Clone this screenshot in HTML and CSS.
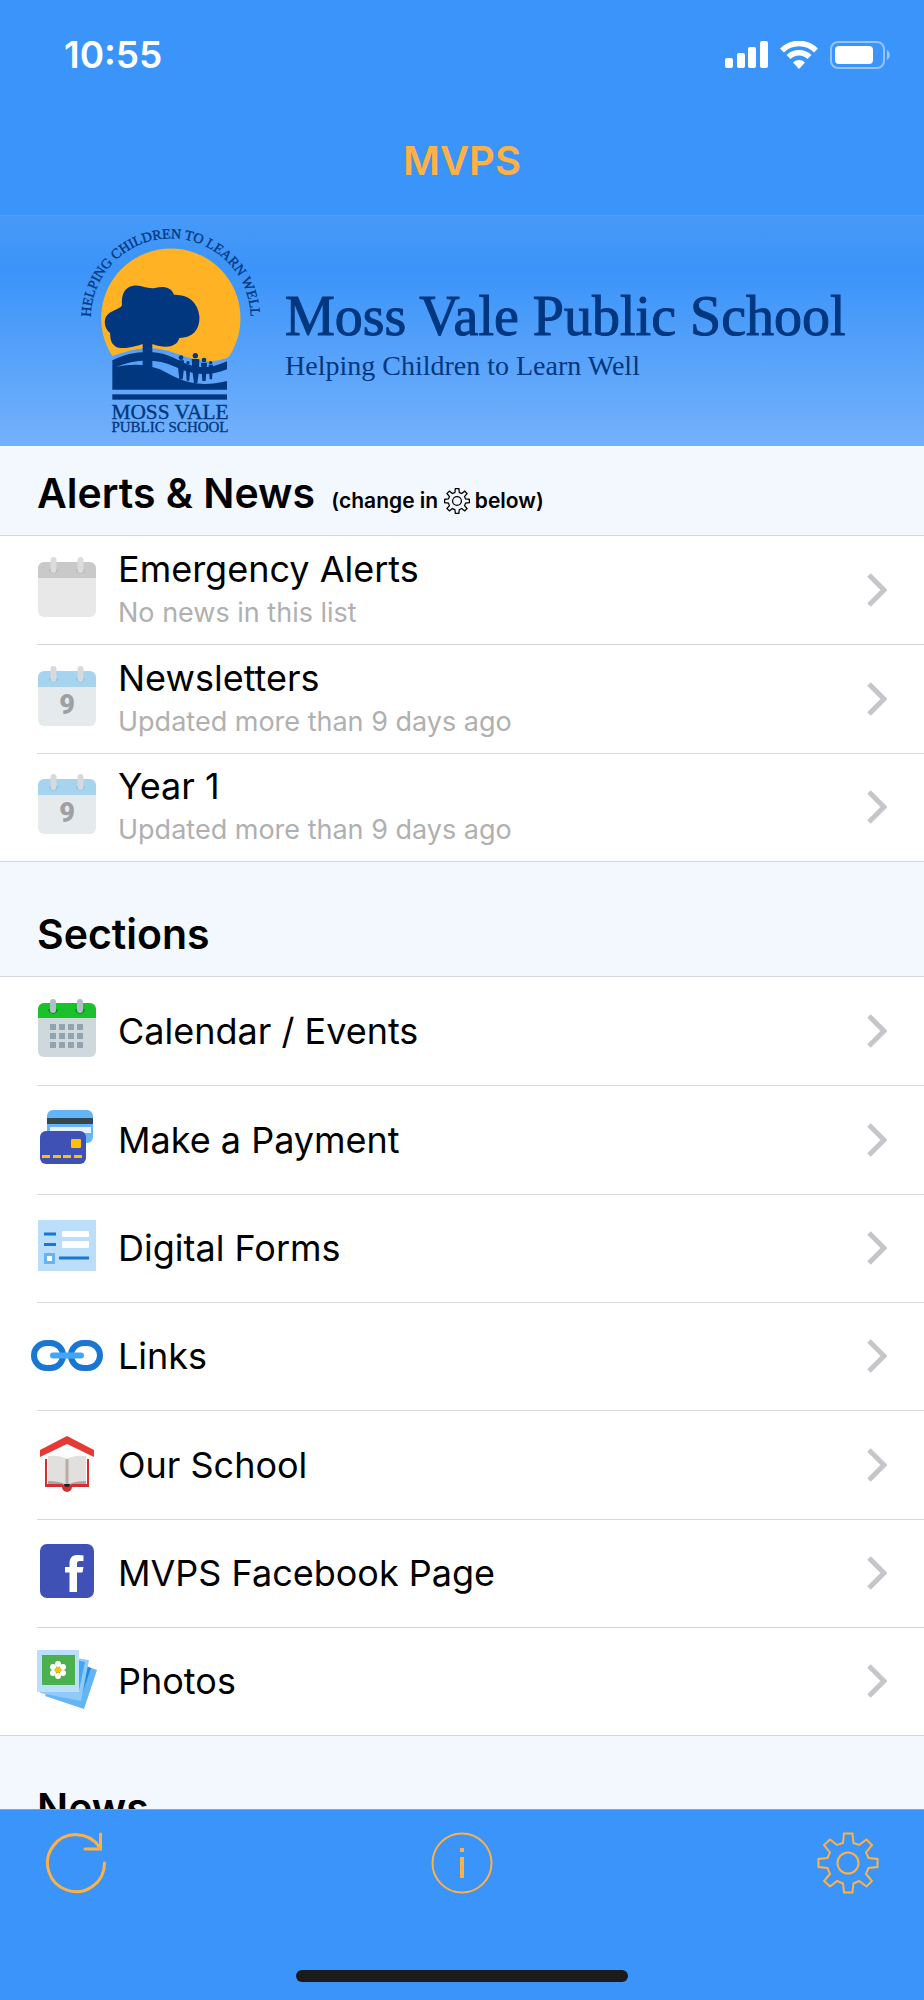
FILE: index.html
```html
<!DOCTYPE html>
<html lang="en">
<head>
    <meta charset="UTF-8">
    <meta name="viewport" content="width=device-width, initial-scale=1.0">
    <title>MVPS</title>
    <link rel="stylesheet" href="styles.css">
</head>
<body>
    <!-- Shared shapes -->
    <svg class="sprite" aria-hidden="true">
        <symbol id="chevron" viewBox="0 0 20 34">
            <path d="M2 2l15 15L2 32" fill="none" stroke="#c6c5ca" stroke-width="5"/>
        </symbol>
        <symbol id="gear" viewBox="0 0 62 62">
            <g fill="none" stroke="currentColor" stroke-linejoin="miter">
                <path d="M27 1.5H35.5L36.5 11L42 13L49.5 7.5L55 13L49 20.5L51.5 26L60.5 27V35L51.5 36L49 42L55 49L49.5 54.500L42 49L36.500 51.500L35.500 60.500H27L26 51.5L20 49L13 54.5L7 49L13 42L10.5 36L1.5 35V27L10.5 26L13 20.5L7 13L13 7.5L20 13L26 11Z"/>
                <circle cx="31" cy="31" r="10.5"/>
            </g>
        </symbol>
        <symbol id="day" viewBox="0 0 58 60">
            <path d="M0 20h58v34a6 6 0 0 1-6 6H6a6 6 0 0 1-6-6z" fill="#e5eaed"/>
            <path d="M6 5h46a6 6 0 0 1 6 6v10H0V11a6 6 0 0 1 6-6z" fill="#a6d4ee"/>
            <path d="M11 12a4.500 4.500 0 0 0 9 0zM38 12a4.500 4.500 0 0 0 9 0z" fill="#93bdd6"/>
            <path d="M15.500 3v10M42.500 3v10" stroke="#d5dade" stroke-width="6" stroke-linecap="round"/>
            <text x="29" y="48" text-anchor="middle" font-family="Roboto, sans-serif" font-weight="900" font-size="27" fill="#9da1a3">9</text>
        </symbol>
    </svg>

    <div class="app">
        <header class="top">
            <div class="status-bar">
                <span class="time">10:55</span>
                <div class="status-icons">
                    <svg width="43" height="28" viewBox="0 0 43 28" fill="#fff">
                        <rect x="0" y="17" width="8" height="10" rx="2"/>
                        <rect x="12" y="12" width="8" height="15" rx="2"/>
                        <rect x="23" y="6" width="8" height="21" rx="2"/>
                        <rect x="35" y="0" width="8" height="27" rx="2"/>
                    </svg>
                    <svg width="38" height="28" viewBox="0 0 38 28">
                        <path d="M2 9.5a24 24 0 0 1 34 0M8.5 16a15 15 0 0 1 21 0" fill="none" stroke="#fff" stroke-width="5.5"/>
                        <path d="M13 21.5a8.5 8.5 0 0 1 12 0L19 28z" fill="#fff"/>
                    </svg>
                    <svg width="61" height="28" viewBox="0 0 61 28">
                        <rect x="1" y="1" width="53" height="26" rx="7" fill="none" stroke="#fff" stroke-opacity=".45" stroke-width="2"/>
                        <rect x="5" y="5" width="38" height="18" rx="4" fill="#fff"/>
                        <path d="M57 9a6 6 0 0 1 0 10z" fill="#fff" fill-opacity=".5"/>
                    </svg>
                </div>
            </div>
            <h1>MVPS</h1>
        </header>

        <div class="banner">
            <svg class="logo" viewBox="54 50 555 630" role="img" aria-label="Moss Vale Public School logo">
                <path id="arc" d="M92 327a240 240 0 0 1 480 0" fill="none"/>
                <path d="M157 440A209 209 0 1 1 508 440L500 446C470 456 440 460 405 450C360 440 320 416 265 417C215 418 185 432 157 440Z" fill="#ffb224"/>
                <g fill="#00377f">
                    <path d="M248 404C225 412 185 422 168 412C150 402 152 385 150 371C130 355 130 325 145 314C155 304 180 300 186 288C183 255 195 232 220 229C245 225 260 240 285 236C310 230 332 232 342 256C385 254 414 280 418 320C420 350 408 385 358 386C350 415 315 418 277 404V478H248Z"/>
                    <path d="M157 453C220 420 300 420 350 450C400 478 445 482 501 456V480C450 502 400 498 345 472C290 446 225 448 169 473C215 461 262 465 300 480C350 506 400 540 501 515V541H157Z"/>
                    <rect x="157" y="555" width="344" height="16"/>
                    <circle cx="363" cy="445" r="7"/>
                    <circle cx="384" cy="460" r="5"/>
                    <circle cx="406" cy="439" r="8"/>
                    <circle cx="432" cy="452" r="7"/>
                    <circle cx="452" cy="460" r="5"/>
                    <path d="M354 453h18l-1 32-3 25h-10l-3-25zM377 466h14l-3 48h-8zM395 449h23l-1 36-5 36h-10l-5-36zM423 460h18l-4 55h-10zM446 466h13l-3 44h-7z"/>
                </g>
                <g class="logo-text">
                    <text font-size="42" text-anchor="middle"><textPath href="#arc" startOffset="50%">HELPING CHILDREN TO LEARN WELL</textPath></text>
                    <text x="330" y="630" font-size="64" text-anchor="middle">MOSS VALE</text>
                    <text x="330" y="668" font-size="45" text-anchor="middle">PUBLIC SCHOOL</text>
                </g>
            </svg>
            <div class="banner-text">
                <p class="school">Moss Vale Public School</p>
                <p class="motto">Helping Children to Learn Well</p>
            </div>
        </div>

        <main>
            <h2 class="section-title first">Alerts &amp; News
                <small>(change in <svg class="mini-gear"><use href="#gear"/></svg> below)</small>
            </h2>
            <ul class="list">
                <li><a href="#">
                    <svg class="icon" viewBox="0 0 72 60">
                        <path d="M7 20h58v34a6 6 0 0 1-6 6H13a6 6 0 0 1-6-6z" fill="#e8e8e8"/>
                        <path d="M13 5h46a6 6 0 0 1 6 6v10H7V11a6 6 0 0 1 6-6z" fill="#c9c9c9"/>
                        <path d="M18 12a4.5 4.5 0 0 0 9 0zM45 12a4.5 4.5 0 0 0 9 0z" fill="#b5b5b5"/>
                        <path d="M22.5 3v10M49.5 3v10" stroke="#dcdcdc" stroke-width="6" stroke-linecap="round"/>
                    </svg>
                    <span class="label">Emergency Alerts<small>No news in this list</small></span>
                    <svg class="chevron"><use href="#chevron"/></svg>
                </a></li>
                <li><a href="#">
                    <svg class="icon" viewBox="0 0 72 60"><use href="#day" x="7" width="58" height="60"/></svg>
                    <span class="label">Newsletters<small>Updated more than 9 days ago</small></span>
                    <svg class="chevron"><use href="#chevron"/></svg>
                </a></li>
                <li><a href="#">
                    <svg class="icon" viewBox="0 0 72 60"><use href="#day" x="7" width="58" height="60"/></svg>
                    <span class="label">Year 1<small>Updated more than 9 days ago</small></span>
                    <svg class="chevron"><use href="#chevron"/></svg>
                </a></li>
            </ul>

            <h2 class="section-title">Sections</h2>
            <ul class="list">
                <li><a href="#">
                    <svg class="icon" viewBox="0 0 72 60">
                        <path d="M7 20h58v33a6 6 0 0 1-6 6H13a6 6 0 0 1-6-6z" fill="#cfd8dc"/>
                        <path d="M13 5h46a6 6 0 0 1 6 6v9H7v-9a6 6 0 0 1 6-6z" fill="#19c22a"/>
                        <path d="M17 11a5 5 0 0 0 10 0zM44 11a5 5 0 0 0 10 0z" fill="#128b1d"/>
                        <path d="M22 4v8M49 4v8" stroke="#b0bec5" stroke-width="6" stroke-linecap="round"/>
                        <path d="M19 29h34M19 38h34M19 47h34" stroke="#90a4ae" stroke-width="6" stroke-dasharray="6 3"/>
                    </svg>
                    <span class="label">Calendar / Events</span>
                    <svg class="chevron"><use href="#chevron"/></svg>
                </a></li>
                <li><a href="#">
                    <svg class="icon" viewBox="0 0 72 60">
                        <rect x="16" y="3" width="46" height="33" rx="6" fill="#64b5f6"/>
                        <path d="M16 11h46v6H16z" fill="#37474f"/>
                        <path d="M19 20h41v6H19z" fill="#e3f2fd"/>
                        <rect x="9" y="24" width="46" height="33" rx="6" fill="#3f51b5"/>
                        <rect x="40" y="32" width="10" height="9" rx="1" fill="#ffc107"/>
                        <path d="M11 49.5h8M22 49.5h8M32 49.5h8M43 49.5h8" stroke="#ffc107" stroke-width="3"/>
                    </svg>
                    <span class="label">Make a Payment</span>
                    <svg class="chevron"><use href="#chevron"/></svg>
                </a></li>
                <li><a href="#">
                    <svg class="icon" viewBox="0 0 72 60">
                        <rect x="7" y="5" width="58" height="51" rx="1" fill="#bbdefb"/>
                        <path d="M13 19h12M13 29.5h12M28 43h30" stroke="#1976d2" stroke-width="3"/>
                        <rect x="31" y="16" width="27" height="6" rx="1" fill="#fff"/>
                        <rect x="31" y="26" width="27" height="7" rx="1" fill="#fff"/>
                        <rect x="14.5" y="39.5" width="8" height="8" fill="#fff" stroke="#64b5f6" stroke-width="3"/>
                    </svg>
                    <span class="label">Digital Forms</span>
                    <svg class="chevron"><use href="#chevron"/></svg>
                </a></li>
                <li><a href="#">
                    <svg class="icon" viewBox="0 0 72 60">
                        <rect x="3" y="20" width="29" height="25" rx="12.5" fill="none" stroke="#1976d2" stroke-width="6"/>
                        <rect x="40" y="20" width="29" height="25" rx="12.5" fill="none" stroke="#1976d2" stroke-width="6"/>
                        <path d="M22 32.5h28" stroke="#42a5f5" stroke-width="6" stroke-linecap="round"/>
                    </svg>
                    <span class="label">Links</span>
                    <svg class="chevron"><use href="#chevron"/></svg>
                </a></li>
                <li><a href="#">
                    <svg class="icon" viewBox="0 0 72 60">
                        <path d="M9 18L36 4l27 14v7L36 12 9 25z" fill="#e53935"/>
                        <path d="M14 27h44v28H41a5 5 0 0 1-10 0H14z" fill="#d32f2f"/>
                        <path d="M16 24h40v28H16z" fill="#fff"/>
                        <path d="M17 24q12-1 19 3 7-4 19-3v27q-12-1-19 3-7-4-19-3z" fill="#e2e0df"/>
                        <path d="M17 49q12 0 19 4 7-4 19-4v3H41q-5 3-10 0H17z" fill="#aaa5a3"/>
                        <path d="M34.5 27h3v25h-3z" fill="#bcaaa4"/>
                        <path d="M33 52h6a3 3 0 0 1-6 0z" fill="#222"/>
                    </svg>
                    <span class="label">Our School</span>
                    <svg class="chevron"><use href="#chevron"/></svg>
                </a></li>
                <li><a href="#">
                    <svg class="icon" viewBox="0 0 72 60">
                        <rect x="9" y="4" width="54" height="54" rx="7" fill="#3f51b5"/>
                        <path d="M38.5 52V32.500H34V27h4.500v-3.500c0-6 3-8.500 8.500-8.500q4 0 5.500.5V21h-3.500c-2.500 0-3 1-3 3V27h6.500l-1 5.500H46V52z" fill="#fff"/>
                    </svg>
                    <span class="label">MVPS Facebook Page</span>
                    <svg class="chevron"><use href="#chevron"/></svg>
                </a></li>
                <li><a href="#">
                    <svg class="icon" viewBox="0 0 72 60">
                        <path d="M30 9l36 13-13 39-39-13z" fill="#64b5f6"/>
                        <path d="M40 13l20 7-11 32-20-7z" fill="#1e88e5"/>
                        <path d="M17 6l41 6-8 41-41-8z" fill="#90caf9"/>
                        <path d="M40 11l14 3-6 28-14-3z" fill="#42a5f5"/>
                        <path d="M6 2h42v42H6z" fill="#bbdefb"/>
                        <path d="M11 7h33v30H11z" fill="#4caf50"/>
                        <g fill="#fff">
                            <circle cx="27" cy="16" r="3"/><circle cx="27" cy="28" r="3"/>
                            <circle cx="22" cy="19" r="3"/><circle cx="32" cy="19" r="3"/>
                            <circle cx="22" cy="25" r="3"/><circle cx="32" cy="25" r="3"/>
                        </g>
                        <circle cx="27" cy="22" r="3" fill="#ffc107"/>
                    </svg>
                    <span class="label">Photos</span>
                    <svg class="chevron"><use href="#chevron"/></svg>
                </a></li>
            </ul>

            <h2 class="section-title">News</h2>
        </main>

        <footer class="toolbar">
            <div class="toolbar-buttons">
                <button aria-label="Refresh">
                    <svg width="62" height="62" viewBox="0 0 62 62" fill="none" stroke="currentColor" stroke-width="3" stroke-linecap="round">
                        <path d="M59.500 31a28.500 28.500 0 1 1-5-16M55.500 2v15H40"/>
                    </svg>
                </button>
                <button aria-label="Information">
                    <svg width="62" height="62" viewBox="0 0 62 62">
                        <circle cx="31" cy="31" r="29.500" fill="none" stroke="currentColor" stroke-width="2"/>
                        <path d="M29 16h4v4h-4zM29 25h4v21h-4z" fill="currentColor"/>
                    </svg>
                </button>
                <button aria-label="Settings">
                    <svg width="62" height="62" stroke-width="2"><use href="#gear"/></svg>
                </button>
            </div>
            <div class="home-bar"></div>
        </footer>
    </div>
</body>
</html>
```
FILE: styles.css
```css
* {
    margin: 0;
    padding: 0;
    box-sizing: border-box;
}

body {
    font-family: Inter, 'Liberation Sans', sans-serif;
    background: #f3f7fe;
    color: #000;
}

.sprite {
    display: none;
}

.app {
    height: 100vh;
    display: flex;
    flex-direction: column;
}

.top {
    background: #3b94f9;
    border-bottom: 1px solid #559ff5;
    padding-bottom: 30px;
    flex-shrink: 0;
}

.status-bar {
    display: flex;
    justify-content: space-between;
    align-items: center;
    padding: 32px 33px 0 64px;
    color: white;
}

.time {
    font-size: 37px;
    line-height: 46px;
    font-weight: 600;
}

.status-icons {
    display: flex;
    gap: 12px;
}

.top h1 {
    margin-top: 59px;
    text-align: center;
    color: #ffb143;
    font-size: 40px;
    line-height: 48px;
    font-weight: 600;
}

.banner {
    display: flex;
    align-items: center;
    gap: 22px;
    flex-shrink: 0;
    padding: 10px 30px 10px 78px;
    background: linear-gradient(#4799f7 0%, #3b94f9 24%, #74b1fb 100%);
    color: #00377f;
    font-family: 'Liberation Serif', serif;
}

.logo {
    width: 185px;
    height: 210px;
    flex-shrink: 0;
}

.logo-text {
    font-family: 'Liberation Serif', serif;
    fill: #00377f;
    stroke: #00377f;
    stroke-width: 1px;
}

.banner-text {
    padding-top: 10px;
}

.school {
    font-size: 56px;
    line-height: 60px;
    white-space: nowrap;
    -webkit-text-stroke: 1px #00377f;
}

.motto {
    font-size: 28px;
    line-height: 40px;
}

main {
    flex: 1;
    min-height: 0;
    overflow: hidden;
}

.section-title {
    padding: 47px 37px 17px;
    font-size: 41px;
    line-height: 50px;
    font-weight: 600;
    border-bottom: 1px solid #d3d7dc;
}

.section-title.first {
    padding-top: 22px;
}

.section-title small {
    margin-left: 6px;
    font-size: 21px;
    line-height: 26px;
    font-weight: 600;
}

.mini-gear {
    width: 26px;
    height: 26px;
    stroke-width: 3;
    vertical-align: -6px;
}

.list {
    list-style: none;
    background: white;
    border-bottom: 1px solid #d3d7dc;
}

.list a {
    display: flex;
    align-items: center;
    height: 108px;
    padding: 0 37px 0 31px;
    color: inherit;
    text-decoration: none;
}

.list li:nth-child(3n+2) a {
    height: 109px;
}

/* hairline starts at the text margin, not the screen edge */
.list li + li {
    background: linear-gradient(#d8d8da, #d8d8da) 37px 0 / 100% 1px no-repeat;
}

.icon {
    width: 72px;
    height: 60px;
    margin: 0 15px 6px 0;
    flex-shrink: 0;
    overflow: visible;
}

.label {
    flex: 1;
    font-size: 36px;
    line-height: 48px;
}

.label small {
    display: block;
    margin-bottom: 2px;
    font-size: 27px;
    line-height: 40px;
    color: #b0b0b0;
}

.chevron {
    width: 20px;
    height: 34px;
}

.toolbar {
    background: #3b94f9;
    border-top: 1px solid #7fa6d3;
    flex-shrink: 0;
}

.toolbar-buttons {
    display: flex;
    justify-content: space-between;
    padding: 22px 45px 24px;
}

.toolbar button {
    display: flex;
    background: none;
    border: none;
    color: #ffb143;
    cursor: pointer;
}

.home-bar {
    width: 36%;
    height: 12px;
    margin: 52px auto 18px;
    border-radius: 6px;
    background: #1b1b1b;
}
```
